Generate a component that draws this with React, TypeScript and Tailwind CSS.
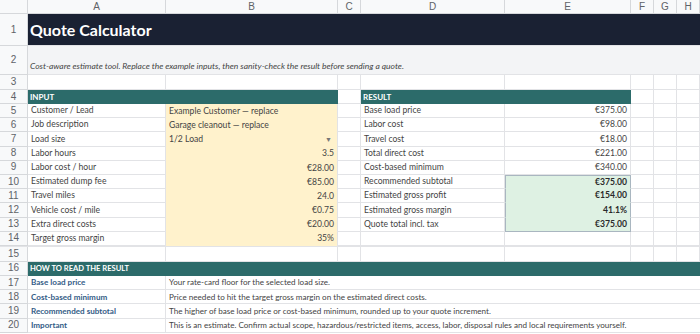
import React from 'react';

const GRID = 'grid grid-cols-[28px_138px_172px_23px_144px_126px_23px_23px_23px]';
const LINE = 'border-r border-b border-[#e2e3e6]';

type InputRow = { label: string; value: string; right?: boolean; dropdown?: boolean };
type ResultRow = { label: string; value: string; highlight?: boolean } | null;

const inputs: InputRow[] = [
  { label: 'Customer / Lead', value: 'Example Customer — replace' },
  { label: 'Job description', value: 'Garage cleanout — replace' },
  { label: 'Load size', value: '1/2 Load', dropdown: true },
  { label: 'Labor hours', value: '3.5', right: true },
  { label: 'Labor cost / hour', value: '€28.00', right: true },
  { label: 'Estimated dump fee', value: '€85.00', right: true },
  { label: 'Travel miles', value: '24.0', right: true },
  { label: 'Vehicle cost / mile', value: '€0.75', right: true },
  { label: 'Extra direct costs', value: '€20.00', right: true },
  { label: 'Target gross margin', value: '35%', right: true },
];

const results: ResultRow[] = [
  { label: 'Base load price', value: '€375.00' },
  { label: 'Labor cost', value: '€98.00' },
  { label: 'Travel cost', value: '€18.00' },
  { label: 'Total direct cost', value: '€221.00' },
  { label: 'Cost-based minimum', value: '€340.00' },
  { label: 'Recommended subtotal', value: '€375.00', highlight: true },
  { label: 'Estimated gross profit', value: '€154.00', highlight: true },
  { label: 'Estimated gross margin', value: '41.1%', highlight: true },
  { label: 'Quote total incl. tax', value: '€375.00', highlight: true },
  null,
];

const notes = [
  ['Base load price', 'Your rate-card floor for the selected load size.'],
  ['Cost-based minimum', 'Price needed to hit the target gross margin on the estimated direct costs.'],
  ['Recommended subtotal', 'The higher of base load price or cost-based minimum, rounded up to your quote increment.'],
  ['Important', 'This is an estimate. Confirm actual scope, hazardous/restricted items, access, labor, disposal rules and local requirements yourself.'],
];

const RowNum = ({ n }: { n: number | string }) => (
  <div className="flex items-center justify-center bg-[#f8f9fa] text-[#5f6368] text-[10px] font-['Liberation_Sans',sans-serif] border-r border-b border-[#d6d8db]">
    {n}
  </div>
);

const Blank = ({ className = '' }: { className?: string }) => <div className={`${LINE} ${className}`} />;

export default function App() {
  return (
    <div className="w-[700px] h-[334px] overflow-hidden bg-white font-['Lato',sans-serif] text-[8.6px] text-[#444] leading-none">
      {/* column letters */}
      <div className={`${GRID} h-[14px]`}>
        <div className="bg-[#f8f9fa] border-r border-b border-[#d6d8db]" />
        {['A', 'B', 'C', 'D', 'E', 'F', 'G', 'H'].map(c => (
          <div
            key={c}
            className="flex items-center justify-center bg-[#f8f9fa] text-[#5f6368] text-[10px] font-['Liberation_Sans',sans-serif] border-r border-b border-[#d6d8db]"
          >
            {c}
          </div>
        ))}
      </div>

      {/* title */}
      <div className={`${GRID} h-[32px]`}>
        <RowNum n={1} />
        <div className="col-span-8 flex items-center bg-[#1a2133] px-[2px] border-b border-[#e2e3e6]">
          <span className="text-white text-[16px] font-bold">Quote Calculator</span>
        </div>
      </div>

      {/* subtitle */}
      <div className={`${GRID} h-[29px]`}>
        <RowNum n={2} />
        <div className="col-span-8 flex items-end pb-[4px] bg-[#f3f4f6] px-[2px] border-b border-[#e2e3e6] whitespace-nowrap">
          <span className="italic text-[8.5px] text-[#444]">
            Cost-aware estimate tool. Replace the example inputs, then sanity-check the result before sending a quote.
          </span>
        </div>
      </div>

      {/* row 3 */}
      <div className={`${GRID} h-[15px]`}>
        <RowNum n={3} />
        {Array.from({ length: 8 }).map((_, i) => <Blank key={i} />)}
      </div>

      {/* section headers */}
      <div className={`${GRID} h-[14px]`}>
        <RowNum n={4} />
        <div className="col-span-2 flex items-center bg-[#2c6b6a] px-[2px] text-white font-bold text-[8px] border-b border-[#2c6b6a]">
          INPUT
        </div>
        <Blank />
        <div className="col-span-2 flex items-center bg-[#2c6b6a] px-[2px] text-white font-bold text-[8px] border-b border-[#2c6b6a]">
          RESULT
        </div>
        <Blank />
        <Blank />
        <Blank />
      </div>

      {inputs.map((row, i) => {
        const res = results[i];
        return (
          <div key={row.label} className={`${GRID} h-[14.2px]`}>
            <RowNum n={i + 5} />
            <div className={`${LINE} flex items-center px-[3px] whitespace-nowrap`}>{row.label}</div>
            <div
              className={`flex items-center px-[3px] whitespace-nowrap bg-[#fff2cc] border-r border-[#e2e3e6] ${
                row.right ? 'justify-end' : 'justify-between'
              }`}
            >
              <span>{row.value}</span>
              {row.dropdown && <span className="text-[7px] text-[#777] pr-[2px]">▼</span>}
            </div>
            <Blank />
            {res ? (
              <>
                <div className={`${LINE} flex items-center px-[3px] whitespace-nowrap`}>{res.label}</div>
                {res.highlight ? (
                  <div
                    className={`flex items-center justify-end px-[3px] bg-[#def1e3] font-bold text-[#2a2a2a] border-l border-r border-[#a9b6c0] ${
                      i === 5 ? 'border-t' : ''
                    } ${i === 8 ? 'border-b' : 'border-b border-b-[#def1e3]'}`}
                  >
                    {res.value}
                  </div>
                ) : (
                  <div className={`${LINE} flex items-center justify-end px-[3px]`}>{res.value}</div>
                )}
              </>
            ) : (
              <>
                <Blank />
                <Blank />
              </>
            )}
            <Blank />
            <Blank />
            <Blank />
          </div>
        );
      })}

      {/* row 15 */}
      <div className={`${GRID} h-[16px] border-t border-[#e2e3e6]`}>
        <RowNum n={15} />
        {Array.from({ length: 8 }).map((_, i) => <Blank key={i} />)}
      </div>

      {/* how to read */}
      <div className={`${GRID} h-[14px]`}>
        <RowNum n={16} />
        <div className="col-span-8 flex items-center bg-[#2c6b6a] px-[2px] text-white font-bold text-[7.6px]">
          HOW TO READ THE RESULT
        </div>
      </div>

      {notes.map(([label, text], i) => (
        <div key={label} className={`${GRID} h-[14.3px] text-[8.1px]`}>
          <RowNum n={i + 17} />
          <div className={`${LINE} flex items-center px-[3px] font-bold text-[#335c86] whitespace-nowrap`}>{label}</div>
          <div className="col-span-7 flex items-center px-[3px] whitespace-nowrap border-b border-[#e2e3e6]">{text}</div>
        </div>
      ))}
    </div>
  );
}
